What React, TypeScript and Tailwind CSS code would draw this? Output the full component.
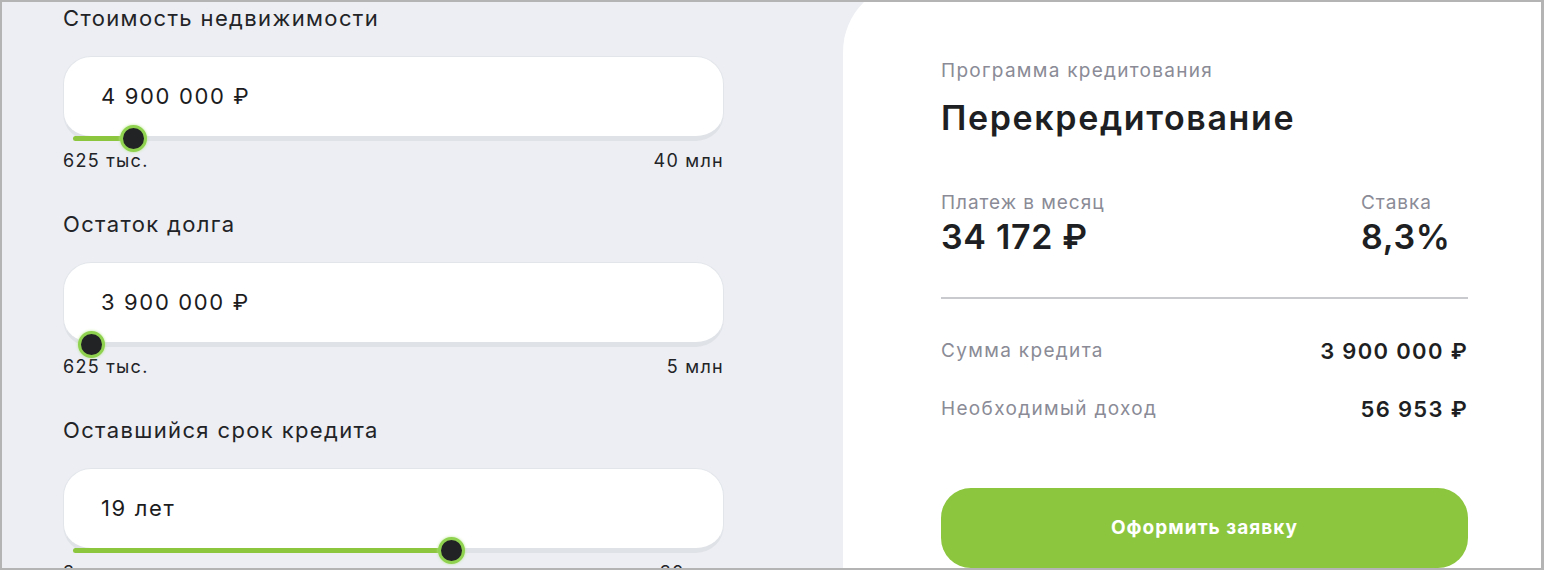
import React from "react";

const font = { fontFamily: "Inter, 'Noto Sans', sans-serif" };

function Slider({
  label,
  value,
  min,
  max,
  pos,
}: {
  label: string;
  value: string;
  min: string;
  max: string;
  pos: number;
}) {
  return (
    <div className="w-[661px]">
      <div className="text-[22px] leading-[28px] tracking-[0.062em] text-[#222326]">{label}</div>
      <div className="relative mt-[24px] h-[85px] rounded-[28px] border border-[#e2e5ea] border-b-[5px] border-b-[#dfe2e7] bg-white">
        <div className="flex h-full items-center pl-[37px] text-[22px] tracking-[0.075em] text-[#1c1c1e]">{value}</div>
        {pos > 40 && (
          <div
            className="absolute bottom-[-5px] left-[9px] h-[5px] rounded-l-full bg-[#8cc63f]"
            style={{ width: pos - 9 }}
          />
        )}
        <div
          className="absolute bottom-[-16px] h-[27px] w-[27px] rounded-full border-[3px] border-[#8fd24f] bg-[#222325] shadow-[0_0_3px_#b9e68f]"
          style={{ left: pos - 13 }}
        />
      </div>
      <div className="mt-[9px] flex justify-between text-[18px] leading-[22px] tracking-[0.07em] text-[#222326]">
        <span>{min}</span>
        <span>{max}</span>
      </div>
    </div>
  );
}

export default function App() {
  return (
    <div
      style={font}
      className="flex h-[570px] w-[1544px] overflow-hidden border-t-2 border-l-2 border-b-2 border-r-[3px] border-[#b4b4b4] bg-[#eceef3]"
    >
      <div className="flex w-[841px] shrink-0 flex-col gap-[38px] pl-[61px] pt-[2px]">
        <Slider label="Стоимость недвижимости" value="4 900 000 ₽" min="625 тыс." max="40 млн" pos={69} />
        <Slider label="Остаток долга" value="3 900 000 ₽" min="625 тыс." max="5 млн" pos={27} />
        <Slider label="Оставшийся срок кредита" value="19 лет" min="3 года" max="30 лет" pos={387} />
      </div>
      <div className="-mt-[20px] flex-1 rounded-tl-[70px] bg-white pl-[98px] pr-[73px] pt-[77px]">
        <div className="text-[19px] leading-[24px] tracking-[0.067em] text-[#8a8b96]">Программа кредитования</div>
        <div className="mt-[15px] text-[34px] font-semibold leading-[40px] tracking-[0.048em] text-[#1e1f22]">Перекредитование</div>
        <div className="mt-[53px] flex justify-between">
          <div>
            <div className="text-[19px] leading-[24px] tracking-[0.05em] text-[#8a8b96]">Платеж в месяц</div>
            <div className="mt-[2px] text-[34px] font-semibold leading-[40px] tracking-[0.02em] text-[#1e1f22]">34 172 ₽</div>
          </div>
          <div className="w-[107px]">
            <div className="text-[19px] leading-[24px] tracking-[0.05em] text-[#8a8b96]">Ставка</div>
            <div className="mt-[2px] text-[34px] font-semibold leading-[40px] tracking-[0.02em] text-[#1e1f22]">8,3%</div>
          </div>
        </div>
        <div className="mt-[40px] h-[2px] bg-[#c9cace]" />
        <div className="mt-[39px] flex items-center justify-between leading-[26px]">
          <span className="text-[19px] tracking-[0.07em] text-[#8a8b96]">Сумма кредита</span>
          <span className="text-[22px] font-semibold tracking-[0.06em] text-[#1e1f22]">3 900 000 ₽</span>
        </div>
        <div className="mt-[32px] flex items-center justify-between leading-[26px]">
          <span className="text-[19px] tracking-[0.07em] text-[#8a8b96]">Необходимый доход</span>
          <span className="text-[22px] font-semibold tracking-[0.06em] text-[#1e1f22]">56 953 ₽</span>
        </div>
        <button className="mt-[66px] flex h-[80px] w-full items-center justify-center rounded-[30px] bg-[#8cc63f] text-[19px] font-bold tracking-[0.055em] text-white">
          Оформить заявку
        </button>
      </div>
    </div>
  );
}
